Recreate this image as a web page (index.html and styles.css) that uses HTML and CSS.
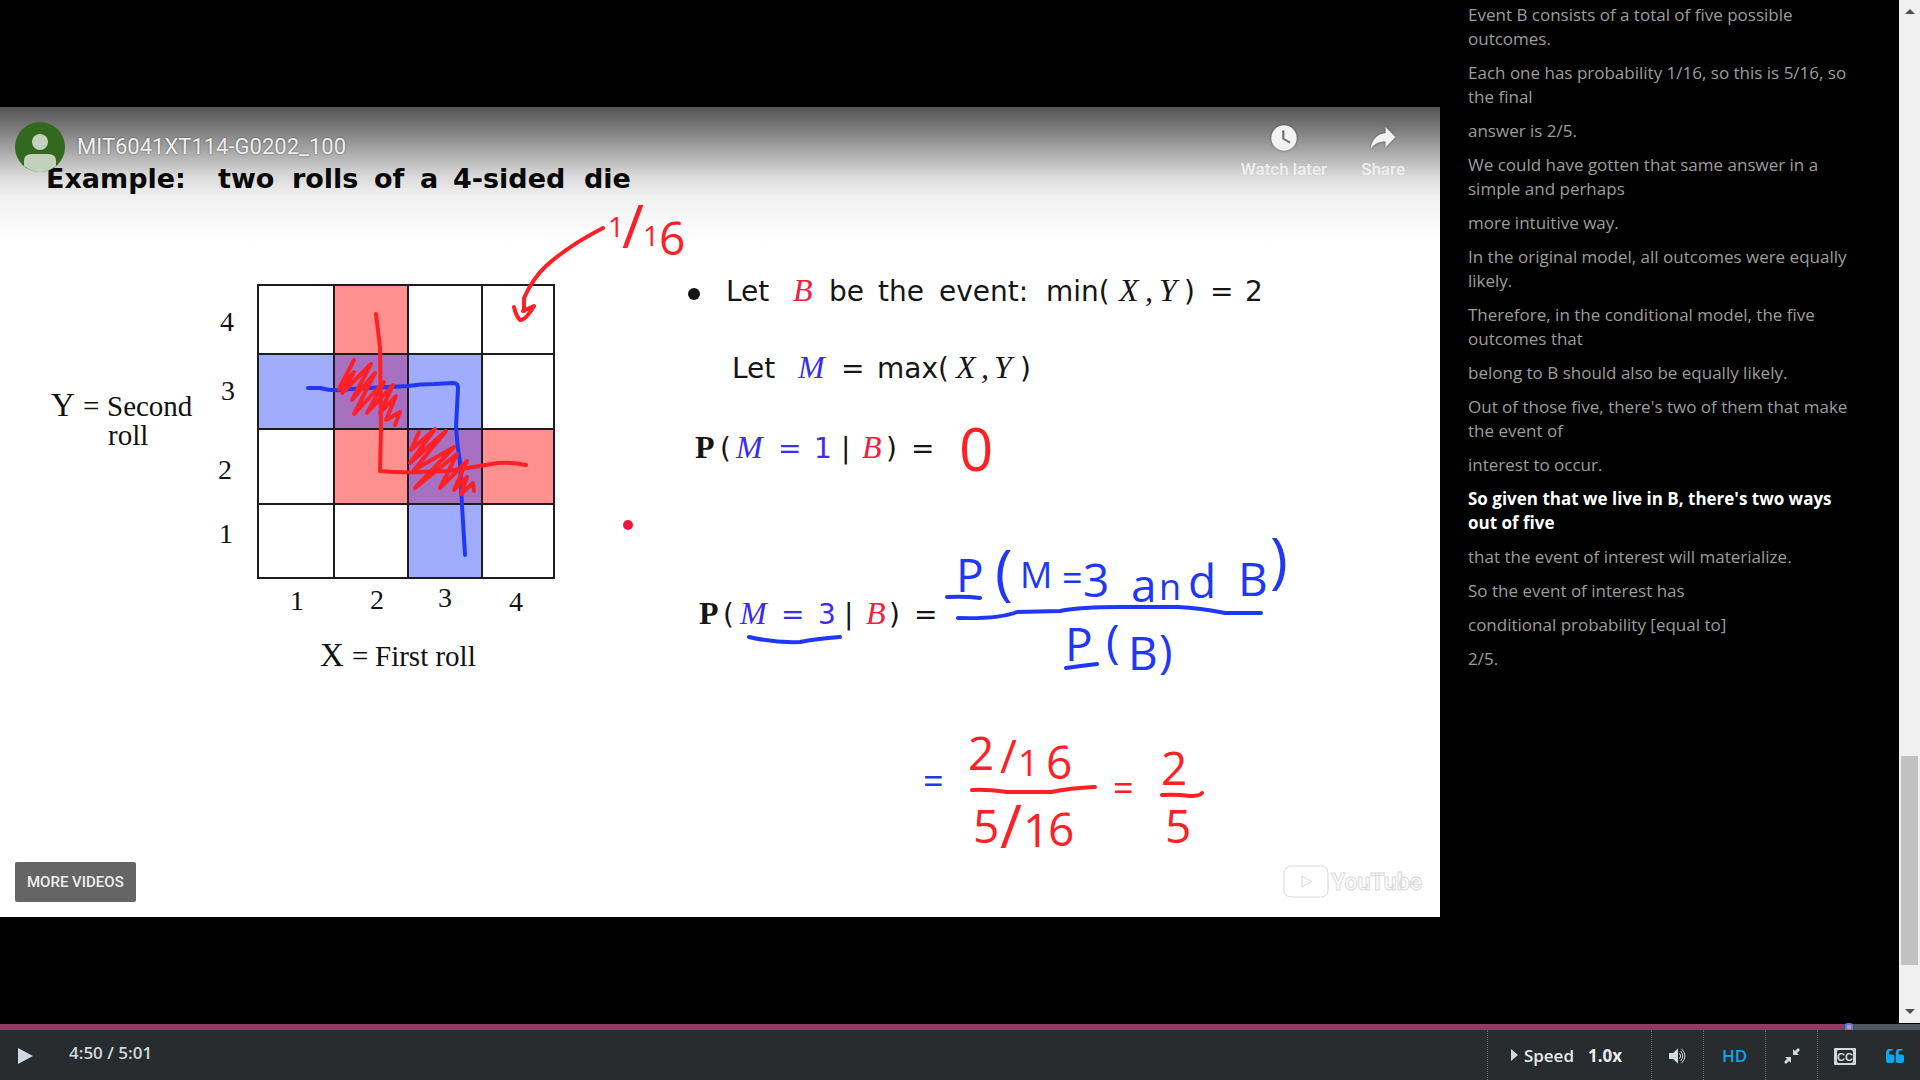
FILE: index.html
```html
<!DOCTYPE html>
<html lang="en">
<head>
<meta charset="utf-8">
<title>MIT6041XT114-G0202_100</title>
<link rel="stylesheet" href="styles.css">
</head>
<body>
<div class="player">
  <main class="stage">
    <section class="video-area">
      <div class="video">
        <svg class="slide" viewBox="0 107 1440 810" role="img" aria-label="Lecture slide">
          <g class="title">
            <text x="46" y="188">Example:</text><text x="218" y="188">two</text><text x="292" y="188">rolls</text><text x="374" y="188">of</text><text x="420" y="188">a</text><text x="453" y="188">4-sided</text><text x="584" y="188">die</text>
          </g>

          <rect class="cell-red" x="334" y="285" width="74" height="219"/>
          <rect class="cell-red" x="408" y="429" width="146" height="75"/>
          <rect class="cell-blue" x="258" y="354" width="150" height="75"/>
          <rect class="cell-blue" x="408" y="354" width="74" height="224"/>
          <rect class="cell-both" x="334" y="354" width="74" height="75"/>
          <rect class="cell-both" x="408" y="429" width="74" height="75"/>
          <path class="grid" d="M258 285H554V578H258ZM334 285V578M408 285V578M482 285V578M258 354H554M258 429H554M258 504H554"/>

          <g class="axis">
            <text x="227" y="331">4</text><text x="228" y="400">3</text><text x="225" y="479">2</text><text x="226" y="543">1</text>
            <text x="297" y="610">1</text><text x="377" y="609">2</text><text x="445" y="607">3</text><text x="516" y="611">4</text>
          </g>
          <g class="label">
            <text class="big" x="51" y="416">Y</text><text x="83" y="416">=</text><text x="107" y="416">Second</text><text x="108" y="445">roll</text>
            <text class="big" x="320" y="666">X</text><text x="352" y="666">=</text><text x="375" y="666">First roll</text>
          </g>

          <g class="math">
            <circle cx="694" cy="294" r="6"/>
            <text x="726" y="301">Let</text><text class="it red" x="793" y="301">B</text><text x="829" y="301">be</text><text x="878" y="301">the</text><text x="939" y="301">event:</text>
            <text x="1046" y="301">min(</text><text class="it" x="1119" y="301">X</text><text class="it" x="1145" y="301">,</text><text class="it" x="1159" y="301">Y</text><text x="1184" y="301">)</text><text x="1210" y="301">=</text><text x="1245" y="301">2</text>

            <text x="732" y="378">Let</text><text class="it blue" x="798" y="378">M</text><text x="841" y="378">=</text><text x="877" y="378">max(</text><text class="it" x="956" y="378">X</text><text class="it" x="981" y="378">,</text><text class="it" x="994" y="378">Y</text><text x="1020" y="378">)</text>

            <text class="serif" x="695" y="458">P</text><text x="720" y="458">(</text><text class="it blue" x="736" y="458">M</text><text class="blue" x="778" y="458">=</text><text class="blue" x="814" y="458">1</text><text x="841" y="458">|</text><text class="it red" x="862" y="458">B</text><text x="886" y="458">)</text><text x="911" y="458">=</text>

            <text class="serif" x="699" y="624">P</text><text x="723" y="624">(</text><text class="it blue" x="740" y="624">M</text><text class="blue" x="781" y="624">=</text><text class="blue" x="818" y="624">3</text><text x="844" y="624">|</text><text class="it red" x="866" y="624">B</text><text x="889" y="624">)</text><text x="914" y="624">=</text>
          </g>

          <g class="ink ink-blue">
            <path d="M308 388L320 388Q335 392 350 389L408 386Q420 384 434 384L453 383Q458 383 458 388L456 427Q457 445 460 462L462 505L465 555"/>
            <path d="M749 637Q775 643 800 642Q815 639 840 637"/>
            <path d="M947 597Q965 596 980 598M958 618Q1000 619 1017 612L1060 611Q1080 607 1121 607H1178Q1200 608 1225 613H1261M1066 668Q1080 666 1097 664"/>
          </g>
          <g class="ink ink-red">
            <path d="M376 314L380 347L381 427L380 471Q400 473 420 472L448 471Q474 467 498 463Q512 462 526 465"/>
            <path d="M354 360L339 389L354 372L342 393L371 364L352 400L375 373L354 414L384 382L367 413L393 385L380 413L396 396L386 420L400 412L395 425"/>
            <path d="M419 432L411 450L435 429L410 463L446 431L414 470L454 447L415 488L457 454L440 488L467 461L454 490L467 477L461 494L473 483L474 491"/>
            <path d="M603 228Q568 246 546 266Q533 278 524 298L524 311M514 307Q516 316 520 320Q525 321 534 306L523 311"/>
            <path d="M972 790Q985 789 1007 792H1051Q1070 788 1095 787M1162 795Q1175 794 1190 796Q1200 796 1202 793"/>
          </g>
          <circle class="pointer" cx="628" cy="525" r="5"/>

          <g class="hand hand-blue">
            <text x="956" y="592">P</text><text class="tall" x="995" y="593">(</text><text class="small" x="1020" y="588">M</text><text class="small" x="1062" y="591">=</text><text x="1083" y="597">3</text><text x="1131" y="602">a</text><text class="small" x="1159" y="600">n</text><text x="1188" y="598">d</text><text x="1238" y="596">B</text><text class="tall" x="1270" y="581">)</text>
            <text x="1065" y="661">P</text><text x="1106" y="658">(</text><text x="1128" y="670">B</text><text x="1159" y="668">)</text>
            <text class="small" x="923" y="794">=</text>
          </g>
          <g class="hand hand-red">
            <text class="tiny" x="608" y="237">1</text><text class="tall" x="622" y="248">/</text><text class="tiny" x="643" y="246">1</text><text x="659" y="255">6</text>
            <text class="tall" x="959" y="471">0</text>
            <text x="968" y="770">2</text><text x="1000" y="773">/</text><text class="small" x="1018" y="776">1</text><text x="1046" y="779">6</text>
            <text x="973" y="843">5</text><text class="tall" x="1000" y="848">/</text><text x="1023" y="847">1</text><text x="1048" y="846">6</text>
            <text class="small" x="1113" y="801">=</text>
            <text x="1161" y="785">2</text><text x="1165" y="843">5</text>
          </g>
        </svg>

        <div class="overlay">
          <header class="top-bar">
            <a class="channel" href="#" aria-label="Channel">
              <svg viewBox="0 0 50 50" width="50" height="50">
                <circle cx="25" cy="25" r="25" fill="#33691e"/>
                <ellipse cx="25" cy="20" rx="8" ry="8" fill="#c2d1bc"/>
                <path d="M9 44V39Q9 32 17 32H33Q41 32 41 39V44Q33 50 25 50T9 44Z" fill="#c2d1bc"/>
              </svg>
            </a>
            <a class="video-title" href="#">MIT6041XT114-G0202_100</a>
            <button class="top-button" type="button">
              <svg viewBox="0 0 36 36" width="36" height="36"><path fill="#f2f2f2" fill-rule="evenodd" d="M18 5.300A12.700 12.700 0 1 0 18 30.700A12.700 12.700 0 1 0 18 5.300ZM16.300 10.500H18.300V18.200L24.500 21.800L23.500 23.500L16.300 19.300Z"/></svg>
              <span>Watch later</span>
            </button>
            <button class="top-button" type="button">
              <svg viewBox="0 0 36 36" width="36" height="36"><path fill="#f2f2f2" d="M20.500 7L30.500 17L20.500 27.500V21.500C13.500 21.500 9 24 5.500 29C6.500 20.500 11.500 14 20.500 13Z"/></svg>
              <span>Share</span>
            </button>
          </header>
          <footer class="bottom-bar">
            <button class="more" type="button">MORE VIDEOS</button>
            <a class="brand" href="#" aria-label="YouTube">
              <svg viewBox="0 0 140 36" width="140" height="36">
                <rect x="1" y="2" width="44" height="31" rx="7"/>
                <path d="M19 12L29 17.500L19 23Z"/>
                <text x="48" y="26">YouTube</text>
              </svg>
            </a>
          </footer>
        </div>
      </div>
    </section>

    <aside class="transcript">
      <ol class="captions">
        <li><a href="#">Event B consists of a total of five possible outcomes.</a></li>
        <li><a href="#">Each one has probability 1/16, so this is 5/16, so the final</a></li>
        <li><a href="#">answer is 2/5.</a></li>
        <li><a href="#">We could have gotten that same answer in a simple and perhaps</a></li>
        <li><a href="#">more intuitive way.</a></li>
        <li><a href="#">In the original model, all outcomes were equally likely.</a></li>
        <li><a href="#">Therefore, in the conditional model, the five outcomes that</a></li>
        <li><a href="#">belong to B should also be equally likely.</a></li>
        <li><a href="#">Out of those five, there's two of them that make the event of</a></li>
        <li><a href="#">interest to occur.</a></li>
        <li><a class="current" href="#">So given that we live in B, there's two ways out of five</a></li>
        <li><a href="#">that the event of interest will materialize.</a></li>
        <li><a href="#">So the event of interest has</a></li>
        <li><a href="#">conditional probability [equal to]</a></li>
        <li><a href="#">2/5.</a></li>
      </ol>
      <div class="scrollbar" aria-hidden="true">
        <span class="arrow-up"></span>
        <span class="track"></span>
        <span class="thumb"></span>
        <span class="track-end"></span>
        <span class="arrow-down"></span>
      </div>
    </aside>
  </main>

  <input class="progress" type="range" min="0" max="301" step="any" value="290.5" aria-label="Video position">

  <div class="controls">
    <button class="play" type="button" aria-label="Play"><svg viewBox="0 0 16 16" width="16" height="16"><path d="M0 0L15 8L0 16Z"/></svg></button>
    <div class="time">4:50 / 5:01</div>
    <button class="control speed" type="button">
      <svg viewBox="0 0 7 12" width="7" height="12"><path d="M0 0L7 6L0 12Z"/></svg>
      <span class="speed-label">Speed</span>
      <b>1.0x</b>
    </button>
    <button class="control" type="button" aria-label="Volume">
      <svg viewBox="0 0 18 16" width="18" height="16"><path d="M0 5H4L9 0.500V15.500L4 11H0Z"/><path class="wave" d="M10.500 5.500Q13 8 10.500 10.500M11.500 3Q16 8 11.500 13M12.500 0.800Q19.500 8 12.500 15.200"/></svg>
    </button>
    <button class="control hd" type="button">HD</button>
    <button class="control" type="button" aria-label="Exit full browser">
      <svg viewBox="0 0 16 16" width="16" height="16"><path d="M9 1L11 3L14 0L16 2L13 5L15 7H9ZM1 9H7V15L5 13L2 16L0 14L3 11Z"/></svg>
    </button>
    <div class="control pair">
      <button type="button" aria-label="Closed captions">
        <svg viewBox="0 0 22 17" width="22" height="17"><rect width="22" height="17" rx="1"/><rect x="3" y="2" width="16" height="13" rx="2" fill="#282c2e"/><text x="11" y="13" text-anchor="middle">CC</text></svg>
      </button>
      <button class="active" type="button" aria-label="Transcript">
        <svg viewBox="0 256 1664 1280" width="18" height="14"><path d="M768 960v384q0 80-56 136t-136 56h-384q-80 0-136-56t-56-136v-704q0-104 40.500-198.500t109.500-163.500 163.500-109.500 198.500-40.500h64q26 0 45 19t19 45v128q0 26-19 45t-45 19h-64q-106 0-181 75t-75 181v32q0 40 28 68t68 28h224q80 0 136 56t56 136zm896 0v384q0 80-56 136t-136 56h-384q-80 0-136-56t-56-136v-704q0-104 40.500-198.500t109.500-163.500 163.500-109.500 198.500-40.500h64q26 0 45 19t19 45v128q0 26-19 45t-45 19h-64q-106 0-181 75t-75 181v32q0 40 28 68t68 28h224q80 0 136 56t56 136z"/></svg>
      </button>
    </div>
  </div>
</div>
</body>
</html>
```
FILE: styles.css
```css
* { box-sizing: border-box; }

body {
  margin: 0;
  background: #000;
  font-family: "Open Sans", sans-serif;
}

button {
  padding: 0;
  border: 0;
  background: none;
  color: inherit;
  font: inherit;
  cursor: pointer;
}

a { color: inherit; text-decoration: none; }
svg { display: block; }

.player {
  display: flex;
  flex-direction: column;
  height: 100vh;
}

.stage {
  flex: 1;
  display: flex;
  min-height: 0;
}

.video-area {
  flex: none;
  width: 75%;
  display: flex;
  align-items: center;
}

.video {
  position: relative;
  width: 100%;
  aspect-ratio: 16 / 9;
  background: #fff;
}

/* Slide */
.slide { width: 100%; }
.title { font: 700 27px "DejaVu Sans", sans-serif; fill: #0a0a0a; }
.cell-red { fill: #ff9090; }
.cell-blue { fill: #a0adff; }
.cell-both { fill: #a870c0; }
.grid { fill: none; stroke: #1c1c22; stroke-width: 2; }
.axis { font: 28px "Liberation Serif", serif; text-anchor: middle; fill: #111; }
.label { font: 29px "Liberation Serif", serif; fill: #111; }
.label .big { font-size: 33px; }
.math { font: 28px "DejaVu Sans", sans-serif; fill: #151515; }
.math .it { font: italic 32px "Liberation Serif", serif; }
.math .serif { font: 700 32px "Liberation Serif", serif; }
.math .red { fill: #f0203f; }
.math .blue { fill: #3a2df0; }
.ink { fill: none; stroke-width: 4; stroke-linecap: round; stroke-linejoin: round; }
.ink-red { stroke: #ff2026; }
.ink-blue { stroke: #2038f5; }
.pointer { fill: #f5153c; }
.hand { font: 46px "Open Sans", sans-serif; }
.hand .tiny { font-size: 28px; }
.hand .small { font-size: 36px; }
.hand .tall { font-size: 60px; }
.hand-red { fill: #ff2026; }
.hand-blue { fill: #2038f5; }

/* Video chrome */
.overlay {
  position: absolute;
  inset: 0;
  display: flex;
  flex-direction: column;
  justify-content: space-between;
  font-family: Roboto, sans-serif;
}

.top-bar {
  display: flex;
  align-items: flex-start;
  height: 138px;
  padding: 13px 25px 0 15px;
  color: #eee;
  text-shadow: 0 0 2px rgba(0, 0, 0, 0.5);
  background: linear-gradient(rgba(0, 0, 0, 0.67), rgba(0, 0, 0, 0.5) 17%, rgba(0, 0, 0, 0.28) 38%, rgba(0, 0, 0, 0.15) 50%, rgba(0, 0, 0, 0.06) 65%, rgba(0, 0, 0, 0.01) 90%, transparent);
}

.channel { margin: 2px 12px 0 0; }
.video-title { flex: 1; font-size: 22px; line-height: 54px; }

.top-button {
  display: flex;
  flex-direction: column;
  align-items: center;
  margin: 0 10px 0 24px;
  font-size: 17px;
  font-weight: 500;
  line-height: 26px;
}
.top-button svg { filter: drop-shadow(0 0 1px rgba(0, 0, 0, 0.5)); }

.bottom-bar {
  display: flex;
  justify-content: space-between;
  align-items: center;
  padding: 0 17px 15px 15px;
}

.more {
  height: 40px;
  padding: 0 12px;
  border-radius: 2px;
  background: #656565;
  color: #eee;
  font-size: 15px;
  font-weight: 500;
}

.brand svg { fill: #fff; stroke: #d9d9d9; stroke-width: 1; }
.brand text { font: 700 23px Roboto, sans-serif; }

/* Transcript */
.transcript {
  flex: 1;
  display: flex;
  justify-content: space-between;
  min-width: 0;
  padding-left: 28px;
}

.captions {
  display: flex;
  flex-direction: column;
  gap: 10px;
  width: 392px;
  margin: 0;
  padding: 3px 0 0;
  list-style: none;
  color: #9d9d9d;
  font-size: 17px;
  line-height: 24px;
}
.captions .current { color: #fff; font-weight: 700; }

.scrollbar {
  display: flex;
  flex-direction: column;
  align-items: center;
  width: 21px;
  margin-bottom: 1px;
  padding: 9px 0;
  background: #f0f0f0;
}
.arrow-up, .arrow-down { border: 5px solid transparent; border-top-width: 0; border-bottom: 5px solid #505050; }
.arrow-down { border-bottom-width: 0; border-top: 5px solid #505050; }
.track { flex: 742; }
.thumb { flex: 209; width: 17px; background: #c1c1c1; }
.track-end { flex: 44; }

/* Controls */
.progress {
  appearance: none;
  width: 100%;
  height: 6px;
  margin: 0;
  background: linear-gradient(90deg, #8e3e63 96%, #4f595d 96%);
}
.progress::-webkit-slider-thumb {
  appearance: none;
  width: 8px;
  height: 8px;
  border: 2px solid #5a7fd8;
  border-radius: 3px;
  background: #e589ad;
}

.controls {
  display: flex;
  height: 50px;
  background: #282c2e;
  color: #cfd8dc;
  fill: #cfd8dc;
}

.play { padding: 2px 18px 0; }
.time { flex: 1; padding-left: 17px; font-size: 17px; font-weight: 600; line-height: 46px; }

.control {
  display: flex;
  align-items: center;
  justify-content: center;
  width: 52px;
  padding-top: 2px;
  border-left: 1px dotted #62686b;
}
.speed { width: 164px; padding: 0 6px 0 0; color: #e7ecee; font-size: 17px; font-weight: 600; }
.speed-label { margin: 0 14px 0 6px; }
.speed b { font-weight: 700; }
.wave { fill: none; stroke: #cfd8dc; stroke-width: 1; }
.hd { width: 62px; padding: 0; color: #0ea6ec; font-size: 17px; font-weight: 600; }
.pair { width: 103px; gap: 30px; padding-left: 0; }
.pair text { font: 700 11px "Liberation Sans", sans-serif; }
.active { fill: #0ea6ec; }
```
